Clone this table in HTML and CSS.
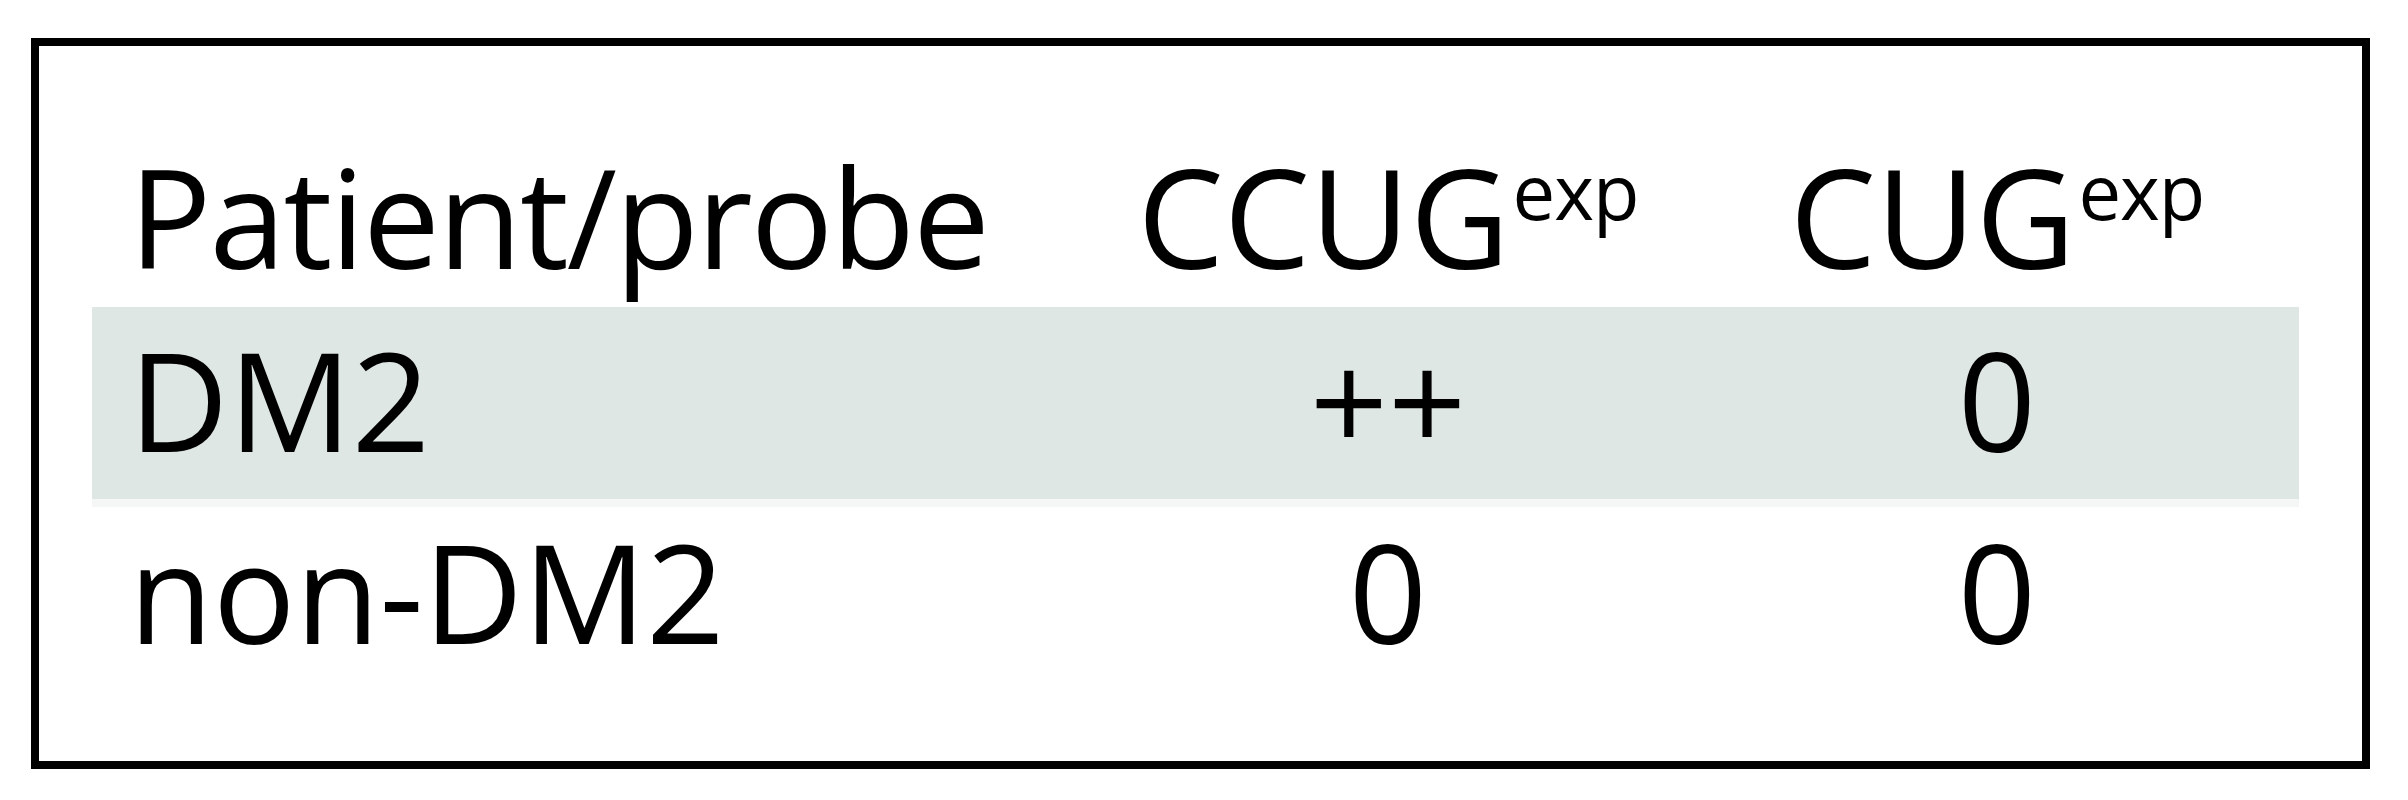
FILE: index.html
```html
<!DOCTYPE html>
<html>
<head>
<meta charset="utf-8">
<link rel="stylesheet" href="styles.css">
</head>
<body>
<div class="frame">
  <div class="table">
    <div class="row head">
      <div class="cell first">Patient/probe</div>
      <div class="cell mid">CCUG<span class="sup">exp</span></div>
      <div class="cell mid">CUG<span class="sup">exp</span></div>
    </div>
    <div class="row band">
      <div class="cell first">DM2</div>
      <div class="cell mid">++</div>
      <div class="cell mid">0</div>
    </div>
    <div class="row">
      <div class="cell first">non-DM2</div>
      <div class="cell mid">0</div>
      <div class="cell mid">0</div>
    </div>
  </div>
</div>
</body>
</html>
```

FILE: styles.css
```css
html, body {
  margin: 0;
  padding: 0;
  background: #ffffff;
}
body {
  width: 2408px;
  height: 800px;
  padding: 38px 0 0 31px;
  box-sizing: border-box;
}
.frame {
  width: 2339px;
  height: 731px;
  box-sizing: border-box;
  border: 8px solid #000000;
  padding: 69px 63px 0 53px;
  font-family: "Open Sans", "Noto Sans", sans-serif;
  font-size: 137px;
  color: #000000;
}
.table {
  display: flex;
  flex-direction: column;
}
.row {
  display: grid;
  grid-template-columns: 989px 614px 604px;
  height: 192px;
  align-items: center;
}
.band {
  background: #dfe7e4;
  box-shadow: 0 8px 0 #f4f7f6;
}
.cell {
  line-height: 1;
  padding-bottom: 8px;
  white-space: nowrap;
}
.head .cell {
  padding-bottom: 0;
  padding-top: 10px;
}
.head .first {
  letter-spacing: -2px;
}
.first {
  padding-left: 37px;
}
.mid {
  text-align: center;
}
.sup {
  font-size: 76px;
  vertical-align: 49px;
  line-height: 0;
  margin-left: 3px;
  letter-spacing: -1px;
}
```
